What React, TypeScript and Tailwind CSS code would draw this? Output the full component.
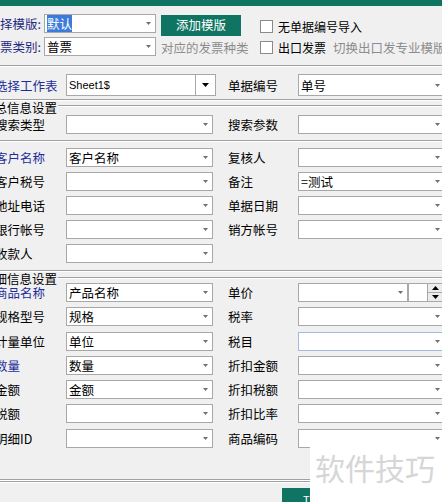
import React from 'react';

const G = 'bg-[#0f7462]';

function Arrow() {
  return (
    <svg width="5" height="3" viewBox="0 0 5 3" className="mr-[4px] shrink-0">
      <path d="M0 0H5L2.5 3Z" fill="#6e6e6e" />
    </svg>
  );
}

function Combo({ cls, children, arrow = true }: { cls: string; children?: React.ReactNode; arrow?: boolean }) {
  return (
    <div className={`flex shrink-0 items-center border bg-white ${cls}`}>
      <div className="min-w-0 flex-1 overflow-hidden whitespace-nowrap pl-[2px] leading-[17px]">{children}</div>
      {arrow && <Arrow />}
    </div>
  );
}

function Sep() {
  return (
    <>
      <div className="h-[1px] bg-[#a0a0a0]" />
      <div className="h-[1px] bg-white" />
    </>
  );
}

function LLabel({ text, blue = false }: { text: string; blue?: boolean }) {
  return (
    <div className={`w-[66px] shrink-0 whitespace-nowrap indent-[-5px] leading-[19px] ${blue ? 'text-[#1f2d9a]' : 'text-black'}`}>
      {text}
    </div>
  );
}

function RLabel({ text }: { text: string }) {
  return <div className="ml-[15px] w-[70px] shrink-0 whitespace-nowrap leading-[19px]">{text}</div>;
}

function Row({
  l,
  blue = false,
  lv = '',
  r,
  rv = '',
  rBorder = 'border-[#a8a8a8]',
  rNode,
}: {
  l: string;
  blue?: boolean;
  lv?: string;
  r?: string;
  rv?: string;
  rBorder?: string;
  rNode?: React.ReactNode;
}) {
  return (
    <div className="flex h-[19px] items-center">
      <LLabel text={l} blue={blue} />
      <Combo cls="h-[19px] w-[147px] border-[#a8a8a8]">{lv}</Combo>
      {r && <RLabel text={r} />}
      {r && (rNode ?? <Combo cls={`h-[19px] w-[147px] ${rBorder}`}>{rv}</Combo>)}
    </div>
  );
}

function Tri({ up }: { up: boolean }) {
  return (
    <svg width="7" height="4" viewBox="0 0 7 4">
      <path d={up ? 'M0 4H7L3.5 0Z' : 'M0 0H7L3.5 4Z'} fill="#000" />
    </svg>
  );
}

function GroupHead({ text, cls }: { text: string; cls: string }) {
  return (
    <div className={`flex items-start ${cls}`}>
      <span className="ml-[-18px] whitespace-nowrap pr-[1px] leading-[13px]">{text}</span>
      <div className="flex-1 mt-[4px] h-[2px] border-t border-[#a0a0a0] bg-white" />
    </div>
  );
}

export default function App() {
  return (
    <div className="relative h-[502px] w-[442px] overflow-hidden bg-[#f0f0f0] text-[12.5px] text-black font-['Noto_Sans_CJK_SC','Noto_Sans',sans-serif]">
      <div className={`h-[6px] ${G}`} />

      {/* top row 1 */}
      <div className="mt-[8px] flex h-[19px] items-start">
        <div className="w-[44px] shrink-0 whitespace-nowrap leading-[19px] text-[#1f2a80]">择模版:</div>
        <Combo cls="h-[19px] w-[112px] border-[#a8a8a8]">
          <span className="bg-[#3b7bdb] text-white">默认</span>
        </Combo>
        <div className={`ml-[5px] mt-[1px] flex h-[21px] w-[80px] shrink-0 items-center justify-center text-white ${G}`}>
          添加模版
        </div>
        <div className="ml-[19px] mt-[6px] h-[13px] w-[13px] shrink-0 border border-[#8a8a8a] bg-white" />
        <div className="ml-[5px] mt-[5px] whitespace-nowrap text-[12px] leading-[15px]">无单据编号导入</div>
      </div>

      {/* top row 2 */}
      <div className="mt-[4px] flex h-[19px] items-start">
        <div className="w-[44px] shrink-0 whitespace-nowrap leading-[19px] text-[#1f2a80]">票类别:</div>
        <Combo cls="h-[19px] w-[112px] border-[#a8a8a8]">普票</Combo>
        <div className="ml-[5px] mt-[1px] w-[99px] shrink-0 whitespace-nowrap leading-[19px] text-[#8c8c8c]">对应的发票种类</div>
        <div className="mt-[4px] h-[13px] w-[13px] shrink-0 border border-[#8a8a8a] bg-white" />
        <div className="ml-[5px] mt-[1px] whitespace-nowrap text-[12px] leading-[19px]">出口发票</div>
        <div className="ml-[7px] mt-[1px] whitespace-nowrap leading-[19px] text-[#8c8c8c]">切换出口发专业模版</div>
      </div>

      <div className="mt-[9px]">
        <Sep />
      </div>

      {/* sheet row */}
      <div className="mt-[7px] flex h-[22px] items-center">
        <div className="w-[66px] shrink-0 whitespace-nowrap indent-[-5px] leading-[19px] text-[#1f2d9a]">选择工作表</div>
        <div className="flex h-[22px] w-[150px] shrink-0 items-stretch border border-[#a8a8a8] bg-white">
          <div className="flex-1 pl-[2px] font-['Liberation_Sans',sans-serif] text-[11px] leading-[20px]">Sheet1$</div>
          <div className="flex w-[20px] items-center justify-center border-l border-[#a8a8a8]">
            <Tri up={false} />
          </div>
        </div>
        <div className="ml-[12px] w-[70px] shrink-0 whitespace-nowrap leading-[19px]">单据编号</div>
        <Combo cls="h-[22px] w-[147px] border-[#a8a8a8]">单号</Combo>
      </div>

      <div className="mt-[3px]">
        <Sep />
      </div>

      <GroupHead text="汇总信息设置" cls="h-[14px]" />

      <Row l="搜索类型" r="搜索参数" />

      <div className="mt-[6px]">
        <Sep />
      </div>

      <div className="mt-[6px] flex flex-col gap-[5px]">
        <Row l="客户名称" blue lv="客户名称" r="复核人" />
        <Row l="客户税号" r="备注" rv="=测试" />
        <Row l="地址电话" r="单据日期" />
        <Row l="银行帐号" r="销方帐号" />
        <Row l="收款人" />
      </div>

      <div className="mt-[7px]">
        <Sep />
      </div>

      <GroupHead text="明细信息设置" cls="h-[11px] [&>div]:mt-[5px]" />

      <div className="flex flex-col gap-[5.3px]">
        <Row
          l="商品名称"
          blue
          lv="产品名称"
          r="单价"
          rNode={
            <div className="flex shrink-0 items-stretch">
              <Combo cls="h-[19px] w-[110px] border-[#a8a8a8]" />
              <div className="h-[19px] w-[20px] shrink-0 border border-[#a8a8a8] bg-white" />
              <div className="flex h-[19px] w-[16px] shrink-0 flex-col border border-l-0 border-[#a8a8a8] bg-[#ececec]">
                <div className="flex flex-1 items-center justify-center border-b border-[#a8a8a8]">
                  <Tri up />
                </div>
                <div className="flex flex-1 items-center justify-center">
                  <Tri up={false} />
                </div>
              </div>
            </div>
          }
        />
        <Row l="规格型号" lv="规格" r="税率" />
        <Row l="计量单位" lv="单位" r="税目" rBorder="border-[#a3b9dd]" />
        <Row l="数量" blue lv="数量" r="折扣金额" />
        <Row l="金额" lv="金额" r="折扣税额" />
        <Row l="税额" r="折扣比率" />
        <Row l="明细ID" r="商品编码" />
      </div>

      <div className="mt-[31px]">
        <div className="h-[1px] bg-[#a0a0a0]" />
        <div className="h-[1px] bg-white" />
        <div className="h-[1px] bg-[#a0a0a0]" />
        <div className="h-[1px] bg-white" />
      </div>

      <div className={`ml-[282px] mt-[5px] flex h-[22px] w-[80px] items-center pl-[21px] text-[11px] text-white ${G}`}>T</div>

      {/* watermark overlay */}
      <div className="absolute bottom-0 left-[310px] right-0 top-[447px] bg-white">
        <div className="ml-[5px] mt-[5px] whitespace-nowrap text-[30px] leading-[30px] text-[#d6d6d6]">软件技巧</div>
      </div>
    </div>
  );
}
